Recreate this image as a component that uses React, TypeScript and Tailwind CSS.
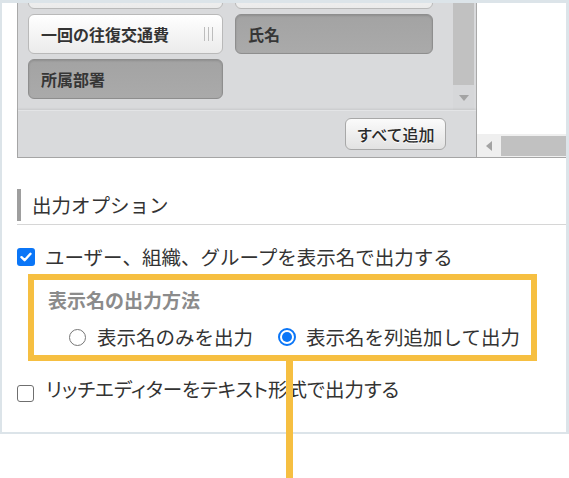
import React from "react";

const JP = { fontFamily: '"Noto Sans CJK JP", "Noto Sans", sans-serif' };

function WhiteItem({ label }: { label: string }) {
  return (
    <div className="h-[40px] rounded-[6px] border border-[#b9b9b9] bg-gradient-to-b from-[#ffffff] to-[#ebebeb] shadow-[inset_0_1px_0_#fff] flex items-center pl-[12px] pr-[9px] justify-between">
      <span className="text-[16px] font-bold text-[#333333] leading-none">{label}</span>
      <div className="flex gap-[3px] items-center">
        <div className="w-px h-[14px] bg-[#bdbdbd]" />
        <div className="w-px h-[14px] bg-[#bdbdbd]" />
        <div className="w-px h-[14px] bg-[#bdbdbd]" />
      </div>
    </div>
  );
}

function GrayItem({ label }: { label: string }) {
  return (
    <div className="h-[40px] rounded-[6px] border border-[#8e8e8e] bg-gradient-to-b from-[#a3a3a3] to-[#aaaaaa] shadow-[inset_0_1px_2px_rgba(0,0,0,0.12)] flex items-center pl-[12px]">
      <span className="text-[16px] font-bold text-[#363636] leading-none">{label}</span>
    </div>
  );
}

export default function App() {
  return (
    <div className="relative w-[569px] h-[478px] bg-white overflow-hidden" style={JP}>
      <div className="w-[569px] h-[434px] border-l-2 border-t-[3px] border-r-[3px] border-b-2 border-[#dce4e9] pl-[15px] flex flex-col">
        {/* top area */}
        <div className="h-[155px] flex border-b border-[#a6a6a6] shrink-0">
          <div className="w-[460px] bg-[#d9dadc] border-l border-r border-[#a9a9a9] flex flex-col">
            <div className="h-[107px] flex overflow-hidden">
              <div className="flex-1 pl-[10px] pr-[19px] overflow-hidden">
                <div className="grid grid-cols-[195px_198px] gap-x-[12px] gap-y-[5px] mt-[-34px]">
                  <WhiteItem label="" />
                  <WhiteItem label="" />
                  <WhiteItem label="一回の往復交通費" />
                  <GrayItem label="氏名" />
                  <GrayItem label="所属部署" />
                </div>
              </div>
              <div className="w-[21px] mr-[2px] flex flex-col">
                <div className="h-[82px] bg-[#c1c1c1]" />
                <div className="flex-1 bg-[#d6d7d9] flex items-center justify-center">
                  <svg width="10" height="6" viewBox="0 0 10 6">
                    <path d="M0 0 L10 0 L5 6 Z" fill="#a3a3a3" />
                  </svg>
                </div>
              </div>
            </div>
            <div className="flex-1 border-t border-[#e3e4e6] shadow-[0_-1px_2px_rgba(0,0,0,0.08)] flex items-start justify-end pr-[30px] pt-[7px]">
              <button className="w-[101px] h-[32px] rounded-[6px] border border-[#a8a8a8] bg-gradient-to-b from-[#fbfbfb] to-[#e2e2e2] text-[16px] font-medium text-[#2a2a2a] leading-none [text-shadow:0_1px_0_#fff]">
                すべて追加
              </button>
            </div>
          </div>
          <div className="flex-1 flex flex-col justify-end">
            <div className="h-[23px] bg-[#efefef] flex items-center">
              <div className="w-[24px] flex items-center justify-center">
                <svg width="6" height="10" viewBox="0 0 6 10">
                  <path d="M6 0 L6 10 L0 5 Z" fill="#a3a3a3" />
                </svg>
              </div>
              <div className="flex-1 h-[20px] bg-[#c1c1c1]" />
            </div>
          </div>
        </div>

        {/* heading */}
        <div className="mt-[31px] pb-[3px] border-b border-[#d6d6d6]">
          <div className="h-[32px] border-l-4 border-[#9e9e9e] pl-[11px] flex items-center">
            <span className="text-[19.5px] text-[#333333] leading-none">出力オプション</span>
          </div>
        </div>

        {/* checkbox 1 */}
        <div className="mt-[22px] h-[20px] flex items-center">
          <div className="w-[18px] h-[18px] rounded-[3px] bg-[#0b76f7] flex items-center justify-center">
            <svg width="12" height="10" viewBox="0 0 12 10">
              <path d="M1.5 5.2 L4.6 8.2 L10.5 1.8" stroke="#fff" strokeWidth="2.4" fill="none" strokeLinecap="round" strokeLinejoin="round" />
            </svg>
          </div>
          <span className="ml-[10px] text-[19.5px] text-[#333333] leading-none">
            ユーザー、組織、グループを表示名で出力する
          </span>
        </div>

        {/* highlighted radio group */}
        <div className="mt-[7px] ml-[11px] w-[509px] h-[87px] border-[6px] border-[#f6bf41] pl-[14px] pt-[7px]">
          <div className="h-[24px] flex items-center text-[19px] font-bold text-[#8b8b8b] leading-none">
            表示名の出力方法
          </div>
          <div className="mt-[14px] h-[24px] flex items-center pl-[21px]">
            <div className="w-[17px] h-[17px] rounded-full border-[1.5px] border-[#767676] bg-white" />
            <span className="ml-[11px] text-[19.5px] text-[#333333] leading-none">表示名のみを出力</span>
            <div className="ml-[25px] w-[18px] h-[18px] rounded-full border-2 border-[#0b76f7] bg-white flex items-center justify-center">
              <div className="w-[10px] h-[10px] rounded-full bg-[#0b76f7]" />
            </div>
            <span className="ml-[10px] text-[19.5px] text-[#333333] leading-none">表示名を列追加して出力</span>
          </div>
        </div>

        {/* checkbox 2 */}
        <div className="mt-[16px] h-[24px] flex items-start">
          <div className="mt-[8px] w-[17px] h-[17px] rounded-[3px] border-[1.5px] border-[#6f6f6f] bg-white" />
          <span className="ml-[12px] text-[19.5px] text-[#333333] leading-[24px] [font-feature-settings:'palt']">
            リッチエディターをテキスト形式で出力する
          </span>
        </div>
      </div>

      {/* callout line */}
      <div className="absolute left-[286px] top-[360px] w-[7px] h-[118px] bg-[#f6bf41]" />
    </div>
  );
}
